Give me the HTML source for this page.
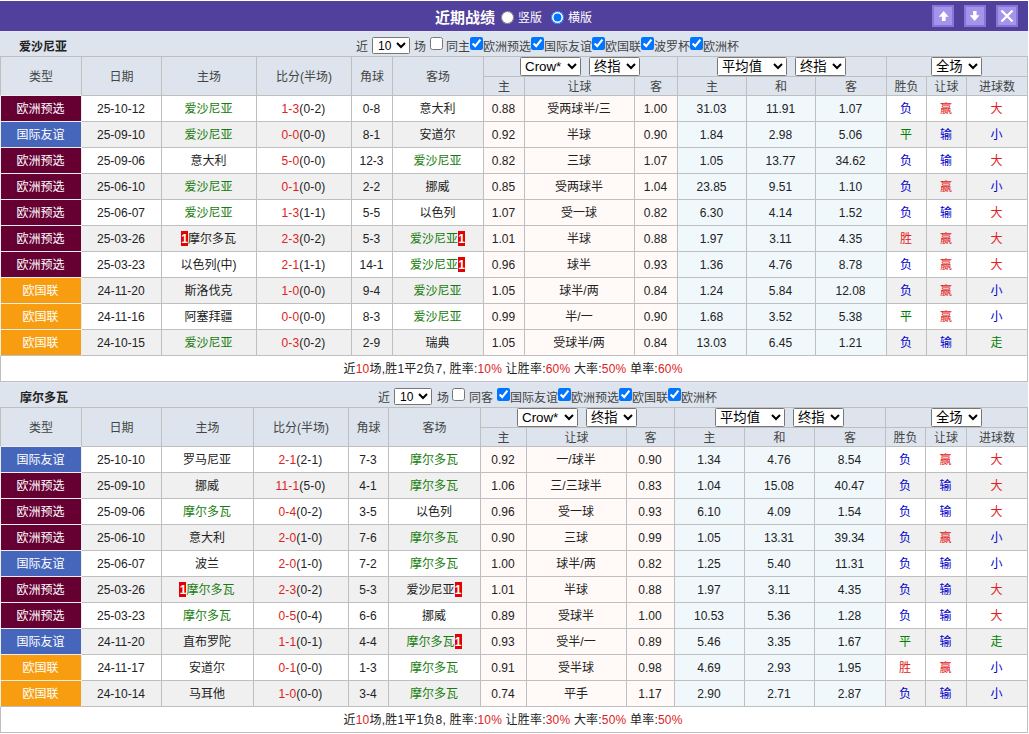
<!DOCTYPE html>
<html lang="zh-CN">
<head>
<meta charset="utf-8">
<title>近期战绩</title>
<style>
* { box-sizing: border-box; }
html, body { margin: 0; padding: 0; background: #fff; }
body { font-family: "Liberation Sans", "Noto Sans CJK SC", sans-serif; font-size: 12px; color: #222; width: 1029px; height: 734px; overflow: hidden; }
.wrap { position: relative; width: 1029px; height: 734px; }
.bar { position: absolute; left: 0; top: 1px; width: 1028px; height: 30px; background: #51409c; color: #fff; }
.bar .ttl { position: absolute; left: 435px; top: 2px; line-height: 30px; font-size: 15px; font-weight: bold; }
.bar .rd { position: absolute; top: 2px; line-height: 30px; font-size: 12px; white-space: nowrap; }
.bar .rd input { margin: 0 4px 0 0; width: 13px; height: 13px; vertical-align: -2px; }
.bar .r1 { left: 501px; }
.bar .r2 { left: 551px; }
.btn { position: absolute; top: 4px; width: 22px; height: 22px; background: #a494ec; border: 2px solid #8777d4; }
.btn svg { position: absolute; left: -2px; top: -2px; }
.b1 { left: 932px; } .b2 { left: 964px; } .b3 { left: 996px; }
.team { position: absolute; left: 0; width: 1028px; height: 26px; background: #dde4ee; border-top: 1px solid #e4e4fa; }
.t1 { top: 31px; } .t2 { top: 382px; }
.t2 .tn { left: 20px !important; }
.team .tn { position: absolute; left: 19px; top: 1px; line-height: 29px; font-size: 12px; font-weight: bold; color: #222; }
.flt { position: absolute; left: 0; top: 0; height: 25px; width: 1028px; }
.flt .ft { position: absolute; top: 0; line-height: 30px; white-space: nowrap; color: #444; }
.flt select { position: absolute; top: 5px; width: 38px; font-family: inherit; font-size: 12px; height: 17px; padding: 0 0 0 1px; margin: 0; border: 1px solid #767676; border-radius: 1.5px; background-color: #fff; color: #000; }
.flt input { position: absolute; top: 5px; margin: 0; width: 13px; height: 13px; }
table.tb { position: absolute; left: 0; border-collapse: separate; border-spacing: 0; table-layout: fixed; width: 1028px; border-top: 1px solid #bfbfbf; }
.tb1 { top: 56px; } .tb2 { top: 407px; }
.tb th, .tb td { border-right: 1px solid #bfbfbf; border-bottom: 1px solid #bfbfbf; padding: 0; text-align: center; font-weight: normal; white-space: nowrap; overflow: hidden; }
.tb tr.h1 > th:first-child, .tb tr > td:first-child { border-left: 1px solid #bfbfbf; }
.tb th { background: #dde4ee; color: #444; }
.tb tr.h1 th { height: 20px; padding-bottom: 2px; }
.tb tr.h1 th.sel { padding: 0; font-size: 0; }
.tb tr.h2 th { height: 19px; line-height: 16px; padding-top: 2px; }
.tb td { height: 26px; line-height: 23px; padding: 2px 1px 0 0; background: #fff; }
.tb tr.alt td { background: #f0f0f0; }
.tb td.o1, .tb tr.alt td.o1 { background: #fffaf7; }
.tb td.o2, .tb tr.alt td.o2 { background: #f0f8fc; }
.tb tr > td.ty1, .tb tr > td.ty2, .tb tr > td.ty3 { border-right-color: #eee; border-bottom-color: #eee; border-left-color: #eee; }
.tb tr.h1 th:first-child { border-bottom-color: #eee; }
.tb td.ty1, .tb tr.alt td.ty1 { background: #660033; color: #fff; }
.tb td.ty2, .tb tr.alt td.ty2 { background: #4666bb; color: #fff; }
.tb td.ty3, .tb tr.alt td.ty3 { background: #f99d10; color: #fff; }
.gr { color: #167c0d; }
.sc { color: #dd2222; }
.rc { background: #e60000; color: #fff; font-size: 12px; font-weight: bold; display: inline-block; width: 7px; height: 15px; line-height: 14px; padding: 1px 0 0 0; text-align: center; vertical-align: middle; position: relative; top: -1px; letter-spacing: 0; }
.tb td.r { color: #e02020; } .tb td.b { color: #0000cc; } .tb td.g { color: #008000; }
.tb th.sel { text-align: left; }
.tb th.sel select { font-family: inherit; font-size: 13.33px; height: 19px; padding: 0; margin: 0; border: 1px solid #767676; border-radius: 1.5px; background-color: #fff; color: #000; vertical-align: top; }
.tb1 th.sel select.s1 { width: 61px; margin-left: 36px; margin-right: 8px; }
.tb1 th.sel select.s2 { width: 51px; }
.tb1 th.sel select.s3 { width: 70px; margin-left: 39px; margin-right: 8px; }
.tb1 th.sel select.s4 { width: 51px; margin-left: 44px; }
.tb2 th.sel select.s1 { width: 61px; margin-left: 36px; margin-right: 8px; }
.tb2 th.sel select.s2 { width: 51px; }
.tb2 th.sel select.s3 { width: 70px; margin-left: 40px; margin-right: 8px; }
.tb2 th.sel select.s4 { width: 51px; margin-left: 45px; }
.tb tr.sum td { height: 26px; background: #fff; text-align: center; letter-spacing: 0.2px; padding-right: 2px; }
.tb tr.sum i { font-style: normal; color: #dd2222; }
.tb td:nth-child(4) { letter-spacing: 0.17px; }
.tb tr:nth-last-child(2) > td:first-child { border-bottom-color: #bfbfbf; }

</style>
</head>
<body>
<div class="wrap">
<div class="bar"><span class="ttl">近期战绩</span><label class="rd r1"><input type="radio" name="v">竖版</label><label class="rd r2"><input type="radio" name="v" checked>横版</label>
<span class="btn b1"><svg viewBox="0 0 22 22" width="22" height="22"><path d="M11.7 6 L16.6 11.8 H13.6 V16 H9.9 V11.8 H6.8 Z" fill="#fff"/></svg></span>
<span class="btn b2"><svg viewBox="0 0 22 22" width="22" height="22"><path d="M10.7 16 L5.7 10.3 H9 V6 H12.6 V10.3 H15.6 Z" fill="#fff"/></svg></span>
<span class="btn b3"><svg viewBox="0 0 22 22" width="22" height="22"><path d="M5.5 5.5 L16.5 16.5 M16.5 5.5 L5.5 16.5" stroke="#fff" stroke-width="2.3" fill="none"/></svg></span>
</div>
<div class="team t1"><b class="tn">爱沙尼亚</b><div class="flt f1"><span class="ft" style="left:356px">近</span><select class="sn" style="left:372px"><option>10</option></select><span class="ft" style="left:414px">场</span><input type="checkbox" class="fc" style="left:430px"><span class="ft" style="left:446px">同主</span><input type="checkbox" class="fc" style="left:470px" checked><span class="ft" style="left:483px">欧洲预选</span><input type="checkbox" class="fc" style="left:531px" checked><span class="ft" style="left:544px">国际友谊</span><input type="checkbox" class="fc" style="left:592px" checked><span class="ft" style="left:605px">欧国联</span><input type="checkbox" class="fc" style="left:641px" checked><span class="ft" style="left:654px">波罗杯</span><input type="checkbox" class="fc" style="left:690px" checked><span class="ft" style="left:703px">欧洲杯</span></div></div>
<table class="tb tb1"><colgroup><col style="width:82px"><col style="width:80px"><col style="width:95px"><col style="width:95px"><col style="width:41px"><col style="width:91px"><col style="width:41px"><col style="width:110px"><col style="width:43px"><col style="width:69px"><col style="width:69px"><col style="width:71px"><col style="width:40px"><col style="width:40px"><col style="width:61px"></colgroup>
<tr class="h1"><th rowspan="2">类型</th><th rowspan="2">日期</th><th rowspan="2">主场</th><th rowspan="2">比分(半场)</th><th rowspan="2">角球</th><th rowspan="2">客场</th><th colspan="3" class="sel sa"><select class="s1"><option>Crow*</option></select><select class="s2"><option>终指</option></select></th><th colspan="3" class="sel sb"><select class="s3"><option>平均值</option></select><select class="s2"><option>终指</option></select></th><th colspan="3" class="sel sc3"><select class="s4"><option>全场</option></select></th></tr>
<tr class="h2"><th>主</th><th>让球</th><th>客</th><th>主</th><th>和</th><th>客</th><th>胜负</th><th>让球</th><th>进球数</th></tr>
<tr><td class="ty1">欧洲预选</td><td>25-10-12</td><td><span class="gr">爱沙尼亚</span></td><td><span class="sc">1-3</span>(0-2)</td><td>0-8</td><td>意大利</td><td class="o1">0.88</td><td class="o1">受两球半/三</td><td class="o1">1.00</td><td class="o2">31.03</td><td class="o2">11.91</td><td class="o2">1.07</td><td class="b">负</td><td class="r">赢</td><td class="r">大</td></tr>
<tr class="alt"><td class="ty2">国际友谊</td><td>25-09-10</td><td><span class="gr">爱沙尼亚</span></td><td><span class="sc">0-0</span>(0-0)</td><td>8-1</td><td>安道尔</td><td class="o1">0.92</td><td class="o1">半球</td><td class="o1">0.90</td><td class="o2">1.84</td><td class="o2">2.98</td><td class="o2">5.06</td><td class="g">平</td><td class="b">输</td><td class="b">小</td></tr>
<tr><td class="ty1">欧洲预选</td><td>25-09-06</td><td>意大利</td><td><span class="sc">5-0</span>(0-0)</td><td>12-3</td><td><span class="gr">爱沙尼亚</span></td><td class="o1">0.82</td><td class="o1">三球</td><td class="o1">1.07</td><td class="o2">1.05</td><td class="o2">13.77</td><td class="o2">34.62</td><td class="b">负</td><td class="b">输</td><td class="r">大</td></tr>
<tr class="alt"><td class="ty1">欧洲预选</td><td>25-06-10</td><td><span class="gr">爱沙尼亚</span></td><td><span class="sc">0-1</span>(0-0)</td><td>2-2</td><td>挪威</td><td class="o1">0.85</td><td class="o1">受两球半</td><td class="o1">1.04</td><td class="o2">23.85</td><td class="o2">9.51</td><td class="o2">1.10</td><td class="b">负</td><td class="r">赢</td><td class="b">小</td></tr>
<tr><td class="ty1">欧洲预选</td><td>25-06-07</td><td><span class="gr">爱沙尼亚</span></td><td><span class="sc">1-3</span>(1-1)</td><td>5-5</td><td>以色列</td><td class="o1">1.07</td><td class="o1">受一球</td><td class="o1">0.82</td><td class="o2">6.30</td><td class="o2">4.14</td><td class="o2">1.52</td><td class="b">负</td><td class="b">输</td><td class="r">大</td></tr>
<tr class="alt"><td class="ty1">欧洲预选</td><td>25-03-26</td><td><span class="rc">1</span>摩尔多瓦</td><td><span class="sc">2-3</span>(0-2)</td><td>5-3</td><td><span class="gr">爱沙尼亚</span><span class="rc">1</span></td><td class="o1">1.01</td><td class="o1">半球</td><td class="o1">0.88</td><td class="o2">1.97</td><td class="o2">3.11</td><td class="o2">4.35</td><td class="r">胜</td><td class="r">赢</td><td class="r">大</td></tr>
<tr><td class="ty1">欧洲预选</td><td>25-03-23</td><td>以色列(中)</td><td><span class="sc">2-1</span>(1-1)</td><td>14-1</td><td><span class="gr">爱沙尼亚</span><span class="rc">1</span></td><td class="o1">0.96</td><td class="o1">球半</td><td class="o1">0.93</td><td class="o2">1.36</td><td class="o2">4.76</td><td class="o2">8.78</td><td class="b">负</td><td class="r">赢</td><td class="r">大</td></tr>
<tr class="alt"><td class="ty3">欧国联</td><td>24-11-20</td><td>斯洛伐克</td><td><span class="sc">1-0</span>(0-0)</td><td>9-4</td><td><span class="gr">爱沙尼亚</span></td><td class="o1">1.05</td><td class="o1">球半/两</td><td class="o1">0.84</td><td class="o2">1.24</td><td class="o2">5.84</td><td class="o2">12.08</td><td class="b">负</td><td class="r">赢</td><td class="b">小</td></tr>
<tr><td class="ty3">欧国联</td><td>24-11-16</td><td>阿塞拜疆</td><td><span class="sc">0-0</span>(0-0)</td><td>8-3</td><td><span class="gr">爱沙尼亚</span></td><td class="o1">0.99</td><td class="o1">半/一</td><td class="o1">0.90</td><td class="o2">1.68</td><td class="o2">3.52</td><td class="o2">5.38</td><td class="g">平</td><td class="r">赢</td><td class="b">小</td></tr>
<tr class="alt"><td class="ty3">欧国联</td><td>24-10-15</td><td><span class="gr">爱沙尼亚</span></td><td><span class="sc">0-3</span>(0-2)</td><td>2-9</td><td>瑞典</td><td class="o1">1.05</td><td class="o1">受球半/两</td><td class="o1">0.84</td><td class="o2">13.03</td><td class="o2">6.45</td><td class="o2">1.21</td><td class="b">负</td><td class="b">输</td><td class="g">走</td></tr>
<tr class="sum"><td colspan="15">近<i>10</i>场,胜1平2负7, 胜率:<i>10%</i> 让胜率:<i>60%</i> 大率:<i>50%</i> 单率:<i>60%</i></td></tr>
</table>
<div class="team t2"><b class="tn">摩尔多瓦</b><div class="flt f2"><span class="ft" style="left:378px">近</span><select class="sn" style="left:394px"><option>10</option></select><span class="ft" style="left:437px">场</span><input type="checkbox" class="fc" style="left:452px"><span class="ft" style="left:469px">同客</span><input type="checkbox" class="fc" style="left:497px" checked><span class="ft" style="left:510px">国际友谊</span><input type="checkbox" class="fc" style="left:558px" checked><span class="ft" style="left:571px">欧洲预选</span><input type="checkbox" class="fc" style="left:619px" checked><span class="ft" style="left:632px">欧国联</span><input type="checkbox" class="fc" style="left:668px" checked><span class="ft" style="left:681px">欧洲杯</span></div></div>
<table class="tb tb2"><colgroup><col style="width:82px"><col style="width:80px"><col style="width:92px"><col style="width:95px"><col style="width:40px"><col style="width:92px"><col style="width:46px"><col style="width:100px"><col style="width:48px"><col style="width:70px"><col style="width:70px"><col style="width:71px"><col style="width:40px"><col style="width:41px"><col style="width:61px"></colgroup>
<tr class="h1"><th rowspan="2">类型</th><th rowspan="2">日期</th><th rowspan="2">主场</th><th rowspan="2">比分(半场)</th><th rowspan="2">角球</th><th rowspan="2">客场</th><th colspan="3" class="sel sa"><select class="s1"><option>Crow*</option></select><select class="s2"><option>终指</option></select></th><th colspan="3" class="sel sb"><select class="s3"><option>平均值</option></select><select class="s2"><option>终指</option></select></th><th colspan="3" class="sel sc3"><select class="s4"><option>全场</option></select></th></tr>
<tr class="h2"><th>主</th><th>让球</th><th>客</th><th>主</th><th>和</th><th>客</th><th>胜负</th><th>让球</th><th>进球数</th></tr>
<tr><td class="ty2">国际友谊</td><td>25-10-10</td><td>罗马尼亚</td><td><span class="sc">2-1</span>(2-1)</td><td>7-3</td><td><span class="gr">摩尔多瓦</span></td><td class="o1">0.92</td><td class="o1">一/球半</td><td class="o1">0.90</td><td class="o2">1.34</td><td class="o2">4.76</td><td class="o2">8.54</td><td class="b">负</td><td class="r">赢</td><td class="r">大</td></tr>
<tr class="alt"><td class="ty1">欧洲预选</td><td>25-09-10</td><td>挪威</td><td><span class="sc">11-1</span>(5-0)</td><td>4-1</td><td><span class="gr">摩尔多瓦</span></td><td class="o1">1.06</td><td class="o1">三/三球半</td><td class="o1">0.83</td><td class="o2">1.04</td><td class="o2">15.08</td><td class="o2">40.47</td><td class="b">负</td><td class="b">输</td><td class="r">大</td></tr>
<tr><td class="ty1">欧洲预选</td><td>25-09-06</td><td><span class="gr">摩尔多瓦</span></td><td><span class="sc">0-4</span>(0-2)</td><td>3-5</td><td>以色列</td><td class="o1">0.96</td><td class="o1">受一球</td><td class="o1">0.93</td><td class="o2">6.10</td><td class="o2">4.09</td><td class="o2">1.54</td><td class="b">负</td><td class="b">输</td><td class="r">大</td></tr>
<tr class="alt"><td class="ty1">欧洲预选</td><td>25-06-10</td><td>意大利</td><td><span class="sc">2-0</span>(1-0)</td><td>7-6</td><td><span class="gr">摩尔多瓦</span></td><td class="o1">0.90</td><td class="o1">三球</td><td class="o1">0.99</td><td class="o2">1.05</td><td class="o2">13.31</td><td class="o2">39.34</td><td class="b">负</td><td class="r">赢</td><td class="b">小</td></tr>
<tr><td class="ty2">国际友谊</td><td>25-06-07</td><td>波兰</td><td><span class="sc">2-0</span>(1-0)</td><td>7-2</td><td><span class="gr">摩尔多瓦</span></td><td class="o1">1.00</td><td class="o1">球半/两</td><td class="o1">0.82</td><td class="o2">1.25</td><td class="o2">5.40</td><td class="o2">11.31</td><td class="b">负</td><td class="b">输</td><td class="b">小</td></tr>
<tr class="alt"><td class="ty1">欧洲预选</td><td>25-03-26</td><td><span class="rc">1</span><span class="gr">摩尔多瓦</span></td><td><span class="sc">2-3</span>(0-2)</td><td>5-3</td><td>爱沙尼亚<span class="rc">1</span></td><td class="o1">1.01</td><td class="o1">半球</td><td class="o1">0.88</td><td class="o2">1.97</td><td class="o2">3.11</td><td class="o2">4.35</td><td class="b">负</td><td class="b">输</td><td class="r">大</td></tr>
<tr><td class="ty1">欧洲预选</td><td>25-03-23</td><td><span class="gr">摩尔多瓦</span></td><td><span class="sc">0-5</span>(0-4)</td><td>6-6</td><td>挪威</td><td class="o1">0.89</td><td class="o1">受球半</td><td class="o1">1.00</td><td class="o2">10.53</td><td class="o2">5.36</td><td class="o2">1.28</td><td class="b">负</td><td class="b">输</td><td class="r">大</td></tr>
<tr class="alt"><td class="ty2">国际友谊</td><td>24-11-20</td><td>直布罗陀</td><td><span class="sc">1-1</span>(0-1)</td><td>4-4</td><td><span class="gr">摩尔多瓦</span><span class="rc">1</span></td><td class="o1">0.93</td><td class="o1">受半/一</td><td class="o1">0.89</td><td class="o2">5.46</td><td class="o2">3.35</td><td class="o2">1.67</td><td class="g">平</td><td class="b">输</td><td class="g">走</td></tr>
<tr><td class="ty3">欧国联</td><td>24-11-17</td><td>安道尔</td><td><span class="sc">0-1</span>(0-0)</td><td>1-3</td><td><span class="gr">摩尔多瓦</span></td><td class="o1">0.91</td><td class="o1">受半球</td><td class="o1">0.98</td><td class="o2">4.69</td><td class="o2">2.93</td><td class="o2">1.95</td><td class="r">胜</td><td class="r">赢</td><td class="b">小</td></tr>
<tr class="alt"><td class="ty3">欧国联</td><td>24-10-14</td><td>马耳他</td><td><span class="sc">1-0</span>(0-0)</td><td>3-4</td><td><span class="gr">摩尔多瓦</span></td><td class="o1">0.74</td><td class="o1">平手</td><td class="o1">1.17</td><td class="o2">2.90</td><td class="o2">2.71</td><td class="o2">2.87</td><td class="b">负</td><td class="b">输</td><td class="b">小</td></tr>
<tr class="sum"><td colspan="15">近<i>10</i>场,胜1平1负8, 胜率:<i>10%</i> 让胜率:<i>30%</i> 大率:<i>50%</i> 单率:<i>50%</i></td></tr>
</table>

</div>
</body>
</html>
